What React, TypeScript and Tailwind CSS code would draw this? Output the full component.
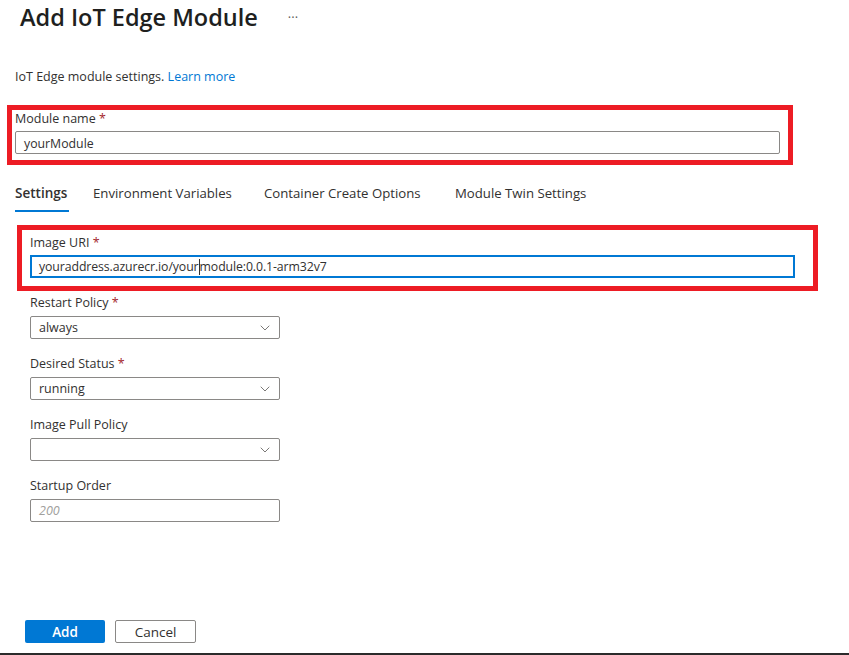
import { ChevronDown } from 'lucide-react';

const font = { fontFamily: '"Open Sans", "Noto Sans", sans-serif' };

interface FieldProps {
  label: string;
  required?: boolean;
  children: React.ReactNode;
}

const Field = ({ label, required, children }: FieldProps) => (
  <div className="mb-[16px]">
    <div className="h-[16px] pt-[1px] text-[12.5px] leading-[16px] text-[#323130]">
      {label}
      {required && <span className="text-[#a4262c]"> *</span>}
    </div>
    <div className="mt-[6px]">{children}</div>
  </div>
);

const Select = ({ value }: { value?: string }) => (
  <div className="flex h-[23px] w-[250px] items-center justify-between rounded-[2px] border border-[#8a8886] pl-[8px] pr-[6px] pt-[1px] text-[12.5px] text-[#323130]">
    <span>{value}</span>
    <ChevronDown className="h-[16px] w-[16px] text-[#605e5c]" strokeWidth={1.25} />
  </div>
);

const tabs = [
  { name: 'Settings', width: 'w-[78px]', active: true },
  { name: 'Environment Variables', width: 'w-[171px]' },
  { name: 'Container Create Options', width: 'w-[191px]' },
  { name: 'Module Twin Settings', width: 'w-[200px]' },
];

export default function App() {
  return (
    <div className="relative flex h-[655px] w-[849px] flex-col overflow-hidden bg-white text-[#323130]" style={font}>
      {/* header */}
      <div className="flex items-center pl-[20px] pt-[1px]">
        <h1 className="text-[23.5px] font-semibold leading-[32px] text-[#201f1e]">Add IoT Edge Module</h1>
        <span className="ml-[30px] mt-[2px] text-[13px] text-[#605e5c]">···</span>
      </div>

      <p className="ml-[15px] mt-[34px] text-[12.5px] leading-[20px]">
        IoT Edge module settings. <span className="text-[#0078d4]">Learn more</span>
      </p>

      {/* module name, highlighted */}
      <div className="ml-[7px] mt-[18px] h-[60px] w-[786px] border-[5px] border-[#ed1c24]">
        <div className="ml-[3px] h-[16px] pt-[1px] text-[12.5px] leading-[16px]">
          Module name<span className="text-[#a4262c]"> *</span>
        </div>
        <div className="ml-[3px] mt-[5px] flex h-[23px] w-[765px] items-center rounded-[2px] border border-[#8a8886] px-[8px] pt-[4px] text-[12.3px]">
          yourModule
        </div>
      </div>

      {/* tabs */}
      <div className="ml-[15px] mt-[18px] flex">
        {tabs.map((tab) => (
          <div key={tab.name} className={tab.width}>
            <div
              className={
                tab.active
                  ? 'text-[13.5px] font-semibold leading-[20px]'
                  : 'text-[13.2px] leading-[20px]'
              }
            >
              {tab.name}
            </div>
            {tab.active && <div className="mt-[7px] h-[2px] w-[54px] bg-[#0078d4]" />}
          </div>
        ))}
      </div>

      {/* image URI, highlighted */}
      <div className="ml-[17px] mt-[13px] h-[66px] w-[801px] border-[5px] border-[#ed1c24]">
        <div className="ml-[8px] mt-[4px] h-[16px] pt-[1px] text-[12.5px] leading-[16px]">
          Image URI<span className="text-[#a4262c]"> *</span>
        </div>
        <div className="ml-[8px] mt-[5px] flex h-[23px] w-[765px] items-center border-2 border-[#0078d4] px-[7px] pt-[1px] text-[12.3px] tracking-[-0.1px]">
          <span>youraddress.azurecr.io/your</span>
          <span className="h-[16px] border-l border-[#323130]" />
          <span>module:0.0.1-arm32v7</span>
        </div>
      </div>

      {/* settings fields */}
      <div className="ml-[30px] mt-[3px]">
        <Field label="Restart Policy" required>
          <Select value="always" />
        </Field>
        <Field label="Desired Status" required>
          <Select value="running" />
        </Field>
        <Field label="Image Pull Policy">
          <Select />
        </Field>
        <Field label="Startup Order">
          <div className="flex h-[23px] w-[250px] items-center rounded-[2px] border border-[#8a8886] px-[8px] pt-[1px] text-[12.5px] italic text-[#a19f9d]">
            200
          </div>
        </Field>
      </div>

      {/* footer */}
      <div className="mb-[10px] ml-[25px] mt-auto flex gap-[10px]">
        <button className="h-[23px] w-[80px] rounded-[2px] bg-[#0078d4] pt-[1px] text-[13.5px] font-semibold text-white">Add</button>
        <button className="h-[23px] w-[81px] rounded-[2px] border border-[#8a8886] bg-white pt-[1px] text-[13.5px] text-[#323130]">Cancel</button>
      </div>
      <div className="h-[2px] w-full bg-[#2b2b2b]" />
    </div>
  );
}
